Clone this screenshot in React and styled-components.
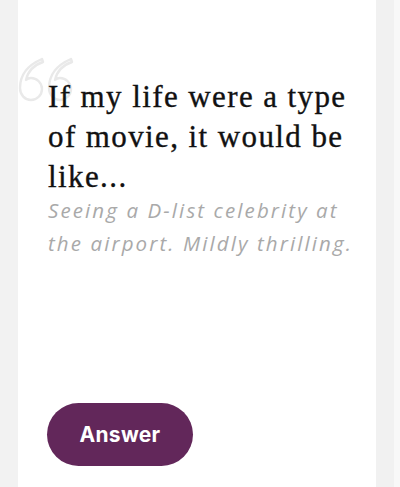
import React from "react";
import styled, { createGlobalStyle } from "styled-components";

const Global = createGlobalStyle`
  html, body { margin: 0; padding: 0; background: #f3f3f3; }
  body { overflow: hidden; }
`;

const Page = styled.div`
  display: flex;
  width: 400px;
  height: 487px;
  background: #f3f3f3;
`;

const Gutter = styled.div`
  flex: 0 0 ${(p) => p.$w}px;
  background: ${(p) => p.$bg};
`;

const Card = styled.div`
  position: relative;
  flex: 0 0 358px;
  background: #ffffff;
  display: flex;
  flex-direction: column;
  padding: 77px 16px 0 30px;
  box-sizing: border-box;
`;

const QuoteMark = styled.svg`
  position: absolute;
  left: 0px;
  top: 57px;
  width: 58px;
  height: 48px;
`;

const Title = styled.h1`
  position: relative;
  margin: 0;
  font-family: "Liberation Serif", "DejaVu Serif", serif;
  font-weight: 400;
  font-size: 31px;
  line-height: 40px;
  color: #111;
  -webkit-text-stroke: 0.35px #111;
  letter-spacing: 1.4px;
`;

const Subtitle = styled.p`
  margin: -3px 0 0;
  font-family: "Open Sans", sans-serif;
  font-style: italic;
  font-weight: 400;
  font-size: 20.5px;
  line-height: 33px;
  color: #a9a9a9;
  letter-spacing: 2.1px;
`;

const AnswerButton = styled.button`
  margin-top: 143px;
  align-self: flex-start;
  width: 146px;
  height: 63px;
  border: none;
  border-radius: 32px;
  background: #62275a;
  color: #fff;
  font-family: "Inter", "Roboto", sans-serif;
  font-weight: 700;
  font-size: 21px;
  letter-spacing: 0.3px;
  padding: 0;
  margin-left: -1px;
`;

const sixPath =
  "M24 2 C10 8, 2 18, 2 31 C2 38, 7 43, 13 43 C19 43, 24 38, 24 32 C24 26, 19 21, 13 21 C11 21, 9 22, 8 23 C10 14, 16 8, 25 5 Z";

export default function App() {
  return (
    <>
      <Global />
      <Page>
        <Gutter $w={18} $bg="#f2f2f2" />
        <Card>
          <QuoteMark viewBox="0 0 58 48" fill="none">
            <path d={sixPath} stroke="#e9e9e9" strokeWidth="2.4" strokeLinejoin="round" />
            <path
              d={sixPath}
              transform="translate(29 0)"
              stroke="#e9e9e9"
              strokeWidth="2.4"
              strokeLinejoin="round"
            />
          </QuoteMark>
          <Title>If my life were a type of movie, it would be like...</Title>
          <Subtitle>Seeing a D-list celebrity at the airport. Mildly thrilling.</Subtitle>
          <AnswerButton>Answer</AnswerButton>
        </Card>
        <Gutter $w={18} $bg="#f1f1f1" />
        <Gutter $w={6} $bg="#f8f8f8" />
      </Page>
    </>
  );
}
